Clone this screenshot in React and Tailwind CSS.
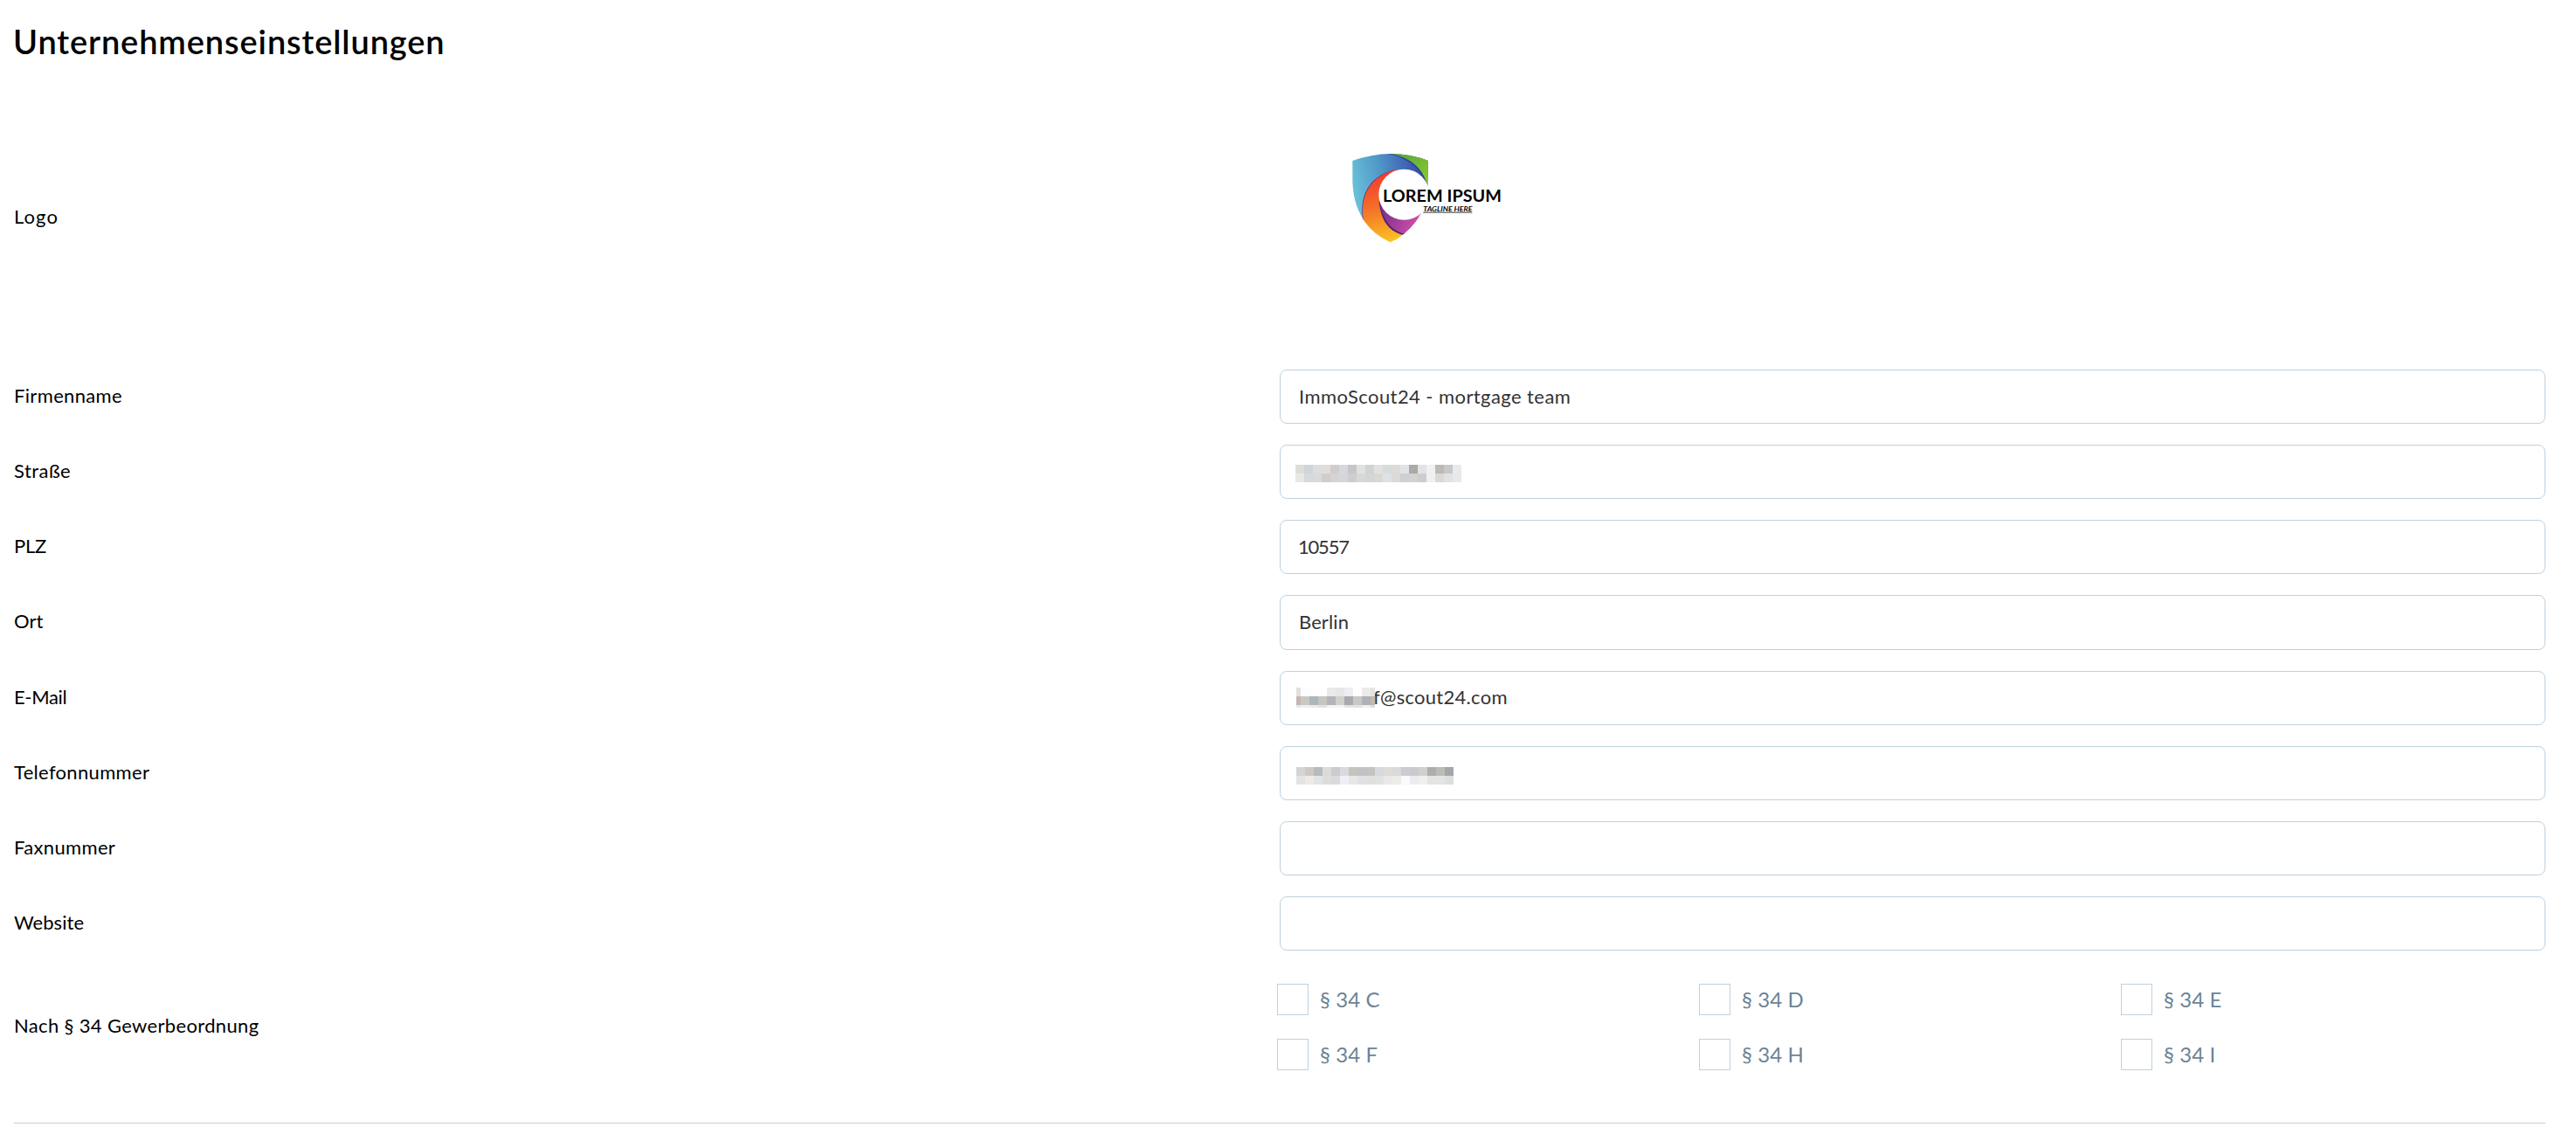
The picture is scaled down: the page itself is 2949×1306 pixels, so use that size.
const streetMosaic = {
  width: 190,
  columns: Array.from({ length: 19 }, () => 10),
  rows: [
    [10, ["#deded8", "#d0d3da", "#dedddc", "#dfdedd", "#d2cdcc", "#d6d8de", "#c7c5c7", "#dfe1e2", "#d0d3d2", "#e1e1e2", "#d8dbda", "#dbdbd9", "#e2e3e5", "#a9a9a7", "#e3e3e3", "#eff0f1", "#bdb9b6", "#c6c8ca", "#e9eaec"]],
    [10, ["#e8e8e2", "#d6d9de", "#dadada", "#d1cdc8", "#d4d4d4", "#d5d6dc", "#cfcdcb", "#d7d8da", "#d5d5d5", "#d9d8d6", "#dee2e6", "#dbdad9", "#cdd1d5", "#d5d1cc", "#cccdd0", "#eff0f1", "#dad9d4", "#e1e2e4", "#e7e8ea"]],
  ],
};

const mailMosaic = {
  width: 90,
  columns: [5, 10, 10, 10, 10, 10, 10, 10, 10, 5],
  rows: [
    [10, ["#e6dfdf", "#fafefe", "#fefefe", "#fefefe", "#eaeae9", "#e6e6e5", "#eeeef1", "#ffffff", "#ebebea", "#e7e2e2"]],
    [10, ["#c6b5b5", "#c9c9c3", "#adb5be", "#c5c5c1", "#b1b5b7", "#d0d0cd", "#aaa9ae", "#c8c8c6", "#b1b1b6", "#c2b9ad"]],
    [3, ["#e9e6e6", "#f0f0f0", "#ececee", "#e2e2e2", "#f4f4f4", "#f4f4f4", "#e3e3e3", "#e2e2e2", "#f0f0f0", "#dddddd"]],
  ],
};

const phoneMosaic = {
  width: 180,
  columns: Array.from({ length: 18 }, () => 10),
  rows: [
    [10, ["#d4d4d4", "#cec8c4", "#b6bcbe", "#dbdbdc", "#cbcccf", "#dadadc", "#c4c4be", "#c2c2c4", "#c3c3c3", "#d7d9da", "#dfdcd7", "#d9d9d9", "#cbccd1", "#cbcbce", "#d0d0cd", "#aeaeae", "#bcbcb6", "#a3a6ab"]],
    [10, ["#e4e4e3", "#ecebe7", "#e2e4e6", "#dedddb", "#dadadb", "#edf1f5", "#e8e7e5", "#e0e1e4", "#e0e1df", "#e1e3e2", "#e9e9ea", "#edecea", "#fafafa", "#ebecf1", "#f0f0ee", "#e4e4e5", "#e3e4e6", "#dedede"]],
  ],
};

function Mosaic({ data, className }) {
  const height = data.rows.reduce((sum, [h]) => sum + h, 0);
  let y = 0;
  const cells = [];
  data.rows.forEach(([h, colors], r) => {
    let x = 0;
    colors.forEach((fill, c) => {
      cells.push(<rect key={`${r}-${c}`} x={x} y={y} width={data.columns[c]} height={h} fill={fill} />);
      x += data.columns[c];
    });
    y += h;
  });
  return (
    <svg width={data.width} height={height} shapeRendering="crispEdges" className={`shrink-0 ${className}`} aria-hidden="true">
      {cells}
    </svg>
  );
}

function CompanyLogo() {
  return (
    <svg viewBox="0 0 660 390" className="mt-16 ml-[55px] h-[130px] w-[220px] shrink-0" role="img" aria-label="Lorem Ipsum">
      <defs>
        <linearGradient id="sky" x1="85" y1="150" x2="340" y2="90" gradientUnits="userSpaceOnUse">
          <stop offset="0" stopColor="#68c0d8" />
          <stop offset="0.4" stopColor="#5096c6" />
          <stop offset="0.75" stopColor="#4064b4" />
          <stop offset="1" stopColor="#33429b" />
        </linearGradient>
        <linearGradient id="leaf" x1="240" y1="50" x2="345" y2="150" gradientUnits="userSpaceOnUse">
          <stop offset="0" stopColor="#55a637" />
          <stop offset="1" stopColor="#8ccd2c" />
        </linearGradient>
        <linearGradient id="flame" x1="170" y1="110" x2="220" y2="350" gradientUnits="userSpaceOnUse">
          <stop offset="0" stopColor="#f3382c" />
          <stop offset="0.5" stopColor="#f4712a" />
          <stop offset="1" stopColor="#fbc521" />
        </linearGradient>
        <linearGradient id="plum" x1="190" y1="240" x2="310" y2="290" gradientUnits="userSpaceOnUse">
          <stop offset="0" stopColor="#7d3190" />
          <stop offset="1" stopColor="#cf4fa8" />
        </linearGradient>
      </defs>
      <path d="M85 72Q150 49 215 48Q285 48 345 72L343 162L262 180L180 220L122 273Q84 215 85 130Z" fill="url(#sky)" />
      <path d="M213 48Q285 48 345 72L343 162C330 100 285 60 213 48Z" fill="url(#leaf)" />
      <path d="M213 48C285 60 330 100 343 162L338 150C318 98 272 60 207 49Z" fill="#2f3f9c" />
      <path d="M232 103C152 121 110 180 119 266L123 276L180 220Z" fill="#5a2a86" />
      <path d="M236 102C150 122 110 188 122 274Q152 322 214 352Q238 343 262 323L300 230L240 150Z" fill="url(#flame)" />
      <path d="M176 212C184 282 212 314 256 326L264 322L250 250Z" fill="#4a2170" />
      <path d="M178 214C188 276 216 310 262 323Q300 292 322 250L262 200Z" fill="url(#plum)" />
      <circle cx="262" cy="188" r="87" fill="#fff" />
      <text x="189" y="212" textLength="408" lengthAdjust="spacingAndGlyphs" className="fill-black font-['Lato'] text-[57px] font-bold">LOREM IPSUM</text>
      <text x="328" y="247" textLength="168" lengthAdjust="spacingAndGlyphs" className="fill-black font-['Lato'] text-[25px] font-bold italic">TAGLINE HERE</text>
      <path d="M328 249.500H496" stroke="#111" strokeWidth="2.500" />
    </svg>
  );
}

const fields = [
  { label: "Firmenname", labelClass: "tracking-[0.34px]", value: "ImmoScout24 - mortgage team", valueClass: "tracking-[0.42px]" },
  { label: "Straße", labelClass: "tracking-[0.45px]", mosaic: streetMosaic, mosaicClass: "-ml-1 mt-[3px]" },
  { label: "PLZ", labelClass: "tracking-[-0.2px]", value: "10557", valueClass: "-ml-px tracking-[-1.2px]" },
  { label: "Ort", labelClass: "", value: "Berlin", valueClass: "tracking-[0.1px]" },
  { label: "E-Mail", labelClass: "tracking-[-0.35px]", value: "f@scout24.com", valueClass: "tracking-[0.28px]", mosaic: mailMosaic, mosaicClass: "relative z-10 -ml-[3px] -mr-[2px]" },
  { label: "Telefonnummer", labelClass: "tracking-[0.32px]", mosaic: phoneMosaic, mosaicClass: "-ml-[3px] mt-[7px]" },
  { label: "Faxnummer", labelClass: "tracking-[0.34px]" },
  { label: "Website", labelClass: "tracking-[0.05px]" },
];

const permits = ["C", "D", "E", "F", "H", "I"];

function Field({ label, labelClass = "", value, valueClass = "", mosaic, mosaicClass }) {
  return (
    <div className="grid h-[62.143px] grid-cols-2 items-center">
      <label className={`pb-[2px] text-[22px] leading-7 text-black ${labelClass}`}>{label}</label>
      <div className="flex h-full items-center rounded-[8px] border border-[#bed1dd] bg-white pl-[21px] text-[22px] leading-7 text-[#333]">
        {mosaic && <Mosaic data={mosaic} className={mosaicClass} />}
        {value && <span className={`pb-px ${valueClass}`}>{value}</span>}
      </div>
    </div>
  );
}

export default function App() {
  return (
    <main className="h-[1306px] overflow-hidden bg-white pr-[35px] pl-4 font-['Lato',sans-serif] text-black">
      <header className="flex h-24 items-center pb-[3px]">
        <h1 className="-ml-px text-[38px] leading-[44px] font-semibold tracking-[0.88px]">Unternehmenseinstellungen</h1>
      </header>

      <section className="grid h-[303px] grid-cols-2">
        <span className="self-center text-[22px] leading-7 tracking-[1.1px]">Logo</span>
        <CompanyLogo />
      </section>

      <section className="flex flex-col gap-6 pt-6">
        {fields.map((f) => (
          <Field key={f.label} {...f} />
        ))}
      </section>

      <section className="grid h-[198px] grid-cols-2 border-b border-[#bed1dd]">
        <span className="mt-[72px] text-[22px] leading-7 tracking-[0.34px]">Nach § 34 Gewerbeordnung</span>
        <div className="-ml-[3px] mr-[3px] grid grid-cols-3 content-start gap-y-[27px] pt-[38px]">
          {permits.map((p) => (
            <label key={p} className="flex h-9 items-center gap-[13px] text-[24px] leading-7 tracking-[0.1px] text-[#6d8494]">
              <span className="size-9 border border-[#bed1dd] bg-white" />
              <span>§ 34 {p}</span>
            </label>
          ))}
        </div>
      </section>
    </main>
  );
}
